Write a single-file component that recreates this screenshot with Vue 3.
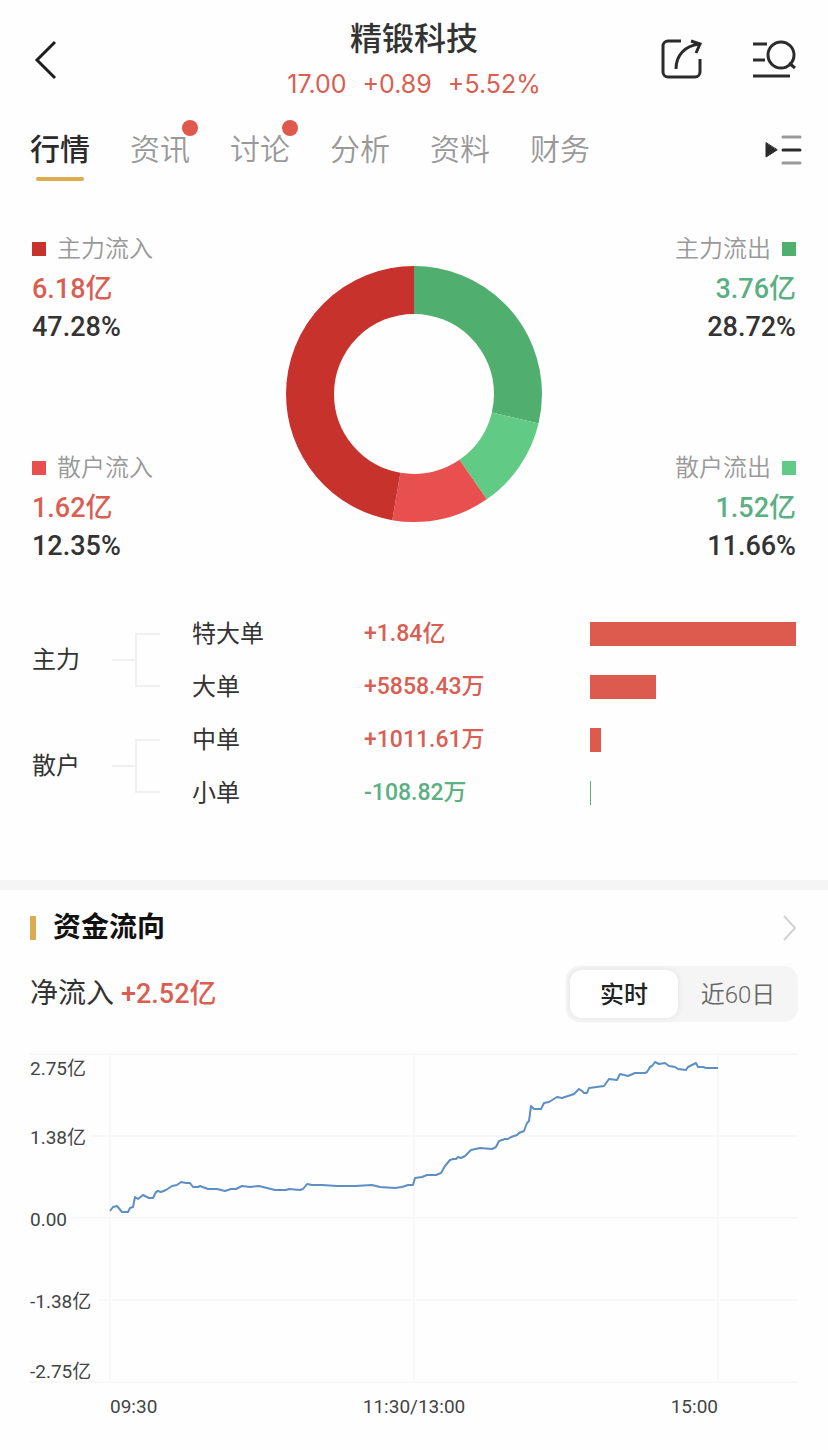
<script setup>
import { ref } from 'vue'

const tabs = [
  { name: '行情' },
  { name: '资讯', dot: true },
  { name: '讨论', dot: true },
  { name: '分析' },
  { name: '资料' },
  { name: '财务' }
]
const activeTab = ref('行情')

const inflows = [
  { label: '主力流入', value: '6.18亿', percent: '47.28%', tone: 'red-deep' },
  { label: '散户流入', value: '1.62亿', percent: '12.35%', tone: 'red-light' }
]
const outflows = [
  { label: '主力流出', value: '3.76亿', percent: '28.72%', tone: 'green-deep' },
  { label: '散户流出', value: '1.52亿', percent: '11.66%', tone: 'green-light' }
]

const slices = [
  { tone: 'green-deep', share: 28.72, start: 0 },
  { tone: 'green-light', share: 11.66, start: 28.72 },
  { tone: 'red-light', share: 12.34, start: 40.38 },
  { tone: 'red-deep', share: 47.28, start: 52.72 }
]

const orders = [
  { group: '主力', name: '特大单', amount: '+1.84亿', width: 100 },
  { name: '大单', amount: '+5858.43万', width: 32 },
  { group: '散户', name: '中单', amount: '+1011.61万', width: 5.4 },
  { name: '小单', amount: '-108.82万', width: 0.5, down: true }
]

const range = ref('实时')
const ranges = ['实时', '近60日']

const gridRows = [
  { text: '2.75亿', y: 10, textY: 31, from: 0 },
  { text: '1.38亿', y: 92, textY: 100, from: 60 },
  { text: '0.00', y: 174, textY: 182, from: 40 },
  { text: '-1.38亿', y: 256, textY: 264, from: 68 },
  { text: '-2.75亿', y: 338, textY: 334, from: 0 }
]
const gridColumns = [80, 384, 688]

const line = [
  '80,167 83,163 87,162 92,168 98,168 100,164 103,163 105,153 108,155 113,151 119,154 123,154',
  '126,148 128,147 131,148 136,146 142,142 147,141 151,138 156,139 160,139 163,143 168,143 170,142',
  '178,145 187,145 195,147 201,145 206,145 212,142 220,143 229,142 237,144 245,146 256,146 259,145',
  '270,146 273,145 277,140 282,141 292,141 307,142 316,142 325,142 342,141 350,143 365,144 372,143',
  '378,141 383,141 385,134 392,133 397,131 406,131 411,129 415,122 420,116 423,115 426,115 428,113',
  '431,114 435,112 441,106 450,104 462,105 466,103 469,97 475,95 478,95 481,93 487,91 489,89',
  '494,87 497,79 499,77 501,62 504,65 511,65 514,59 519,58 527,53 532,54 538,52 544,50 549,45',
  '552,47 554,49 557,49 559,44 574,42 579,35 587,36 590,30 598,32 605,29 615,29 617,28 620,23',
  '622,22 625,18 629,20 635,19 639,22 645,23 648,25 656,26 658,23 666,19 668,23 673,23 676,24 688,24'
].join(' ')
</script>

<template>
  <div class="page">
    <header class="top">
      <button class="icon-button" type="button" aria-label="返回">
        <svg width="28" height="44" viewBox="0 0 28 44" fill="none" stroke="#1e1e1e" stroke-width="3">
          <path d="M23 4 5 22l18 18" />
        </svg>
      </button>
      <div class="stock">
        <h1>精锻科技</h1>
        <p class="quote"><span>17.00</span><span>+0.89</span><span>+5.52%</span></p>
      </div>
      <div class="actions">
        <button class="icon-button" type="button" aria-label="分享">
          <svg width="44" height="44" viewBox="0 0 44 44" fill="none" stroke="#2b2b2b" stroke-width="3">
            <path d="M21 3H8a5 5 0 0 0-5 5v26a5 5 0 0 0 5 5h27a5 5 0 0 0 5-5V21" />
            <path d="M16 31C16 17 25 8 39 6M31 3l9 3-4 9" />
          </svg>
        </button>
        <button class="icon-button" type="button" aria-label="搜索">
          <svg width="44" height="44" viewBox="0 0 44 44" fill="none" stroke="#2b2b2b" stroke-width="3">
            <path d="M1 6h14M1 22h12M1 38h37M37 25l6 5" />
            <circle cx="29" cy="17" r="13" />
          </svg>
        </button>
      </div>
    </header>

    <nav class="tabs">
      <button
        v-for="tab in tabs"
        :key="tab.name"
        type="button"
        class="tab"
        :class="{ active: tab.name === activeTab }"
        @click="activeTab = tab.name"
      >
        {{ tab.name }}
        <i v-if="tab.dot" class="dot"></i>
      </button>
      <button class="icon-button more" type="button" aria-label="更多">
        <svg width="38" height="32" viewBox="0 0 38 32" fill="none" stroke-width="3" stroke-linecap="round">
          <path d="M2 9v14l11-7z" fill="#2b2b2b" stroke="#2b2b2b" stroke-width="1" stroke-linejoin="round" />
          <path d="M19 3h17M19 29h17" stroke="#999" />
          <path d="M19 16h17" stroke="#2b2b2b" />
        </svg>
      </button>
    </nav>

    <section class="summary">
      <div class="side">
        <div v-for="item in inflows" :key="item.label" class="stat">
          <div class="stat-label"><i class="swatch" :class="item.tone"></i>{{ item.label }}</div>
          <div class="stat-value up">{{ item.value }}</div>
          <div class="stat-percent">{{ item.percent }}</div>
        </div>
      </div>
      <svg class="donut" width="256" height="256" viewBox="0 0 256 256" fill="none" role="img" aria-label="资金分布">
        <circle
          v-for="slice in slices"
          :key="slice.tone"
          :class="slice.tone"
          cx="128"
          cy="128"
          r="104"
          stroke-width="48"
          pathLength="100"
          :stroke-dasharray="`${slice.share} ${100 - slice.share}`"
          :stroke-dashoffset="-slice.start"
          transform="rotate(-90 128 128)"
        />
      </svg>
      <div class="side right">
        <div v-for="item in outflows" :key="item.label" class="stat">
          <div class="stat-label">{{ item.label }}<i class="swatch" :class="item.tone"></i></div>
          <div class="stat-value down">{{ item.value }}</div>
          <div class="stat-percent">{{ item.percent }}</div>
        </div>
      </div>
    </section>

    <table class="orders">
      <colgroup>
        <col class="col-group" />
        <col class="col-name" />
        <col class="col-amount" />
        <col />
      </colgroup>
      <tbody>
        <tr v-for="order in orders" :key="order.name">
          <th v-if="order.group" rowspan="2" scope="rowgroup">
            <div class="group">
              {{ order.group }}
              <svg width="48" height="54" viewBox="0 0 48 54" fill="none" stroke="#f0f0f0" stroke-width="2">
                <path d="M0 27h24M48 1H24v52h24" />
              </svg>
            </div>
          </th>
          <td>{{ order.name }}</td>
          <td class="amount" :class="order.down ? 'down' : 'up'">{{ order.amount }}</td>
          <td>
            <div class="bar" :class="{ 'bar-down': order.down }" :style="{ width: order.width + '%' }"></div>
          </td>
        </tr>
      </tbody>
    </table>

    <section class="flow">
      <a class="flow-title" href="#">
        <h2>资金流向</h2>
        <svg width="16" height="28" viewBox="0 0 16 28" fill="none" stroke="#d2d2d2" stroke-width="2">
          <path d="m2 2 11 12L2 26" />
        </svg>
      </a>
      <div class="flow-head">
        <p class="net">净流入<strong class="up">+2.52亿</strong></p>
        <div class="switch">
          <button
            v-for="name in ranges"
            :key="name"
            type="button"
            :class="{ on: name === range }"
            @click="range = name"
          >{{ name }}</button>
        </div>
      </div>
      <svg class="chart" viewBox="0 0 768 376" role="img" aria-label="净流入走势">
        <g class="grid">
          <line v-for="row in gridRows" :key="row.y" :x1="row.from" x2="768" :y1="row.y" :y2="row.y" />
          <line v-for="x in gridColumns" :key="x" :x1="x" :x2="x" y1="10" y2="338" />
        </g>
        <polyline class="trend" :points="line" />
        <text v-for="row in gridRows" :key="row.text" x="0" :y="row.textY">{{ row.text }}</text>
        <text x="80" y="369">09:30</text>
        <text x="384" y="369" text-anchor="middle">11:30/13:00</text>
        <text x="688" y="369" text-anchor="end">15:00</text>
      </svg>
    </section>
  </div>
</template>

<style>
body {
  margin: 0;
  background: #fefefe;
}
</style>

<style scoped>
.page {
  color: #333;
  font-family: Roboto, "Noto Sans CJK SC", sans-serif;
  font-size: 24px;
}

h1,
h2,
p {
  margin: 0;
}

button {
  padding: 0;
  border: 0;
  background: none;
  color: inherit;
  font: inherit;
  cursor: pointer;
}

svg {
  display: block;
}

.up {
  color: #d95f52;
}

.down {
  color: #5bb083;
}

.top {
  display: grid;
  grid-template-columns: 1fr auto 1fr;
  align-items: center;
  padding: 17px 32px 0;
}

.icon-button {
  justify-self: start;
}

.stock {
  text-align: center;
}

h1 {
  margin-bottom: 5px;
  font-size: 32px;
  font-weight: 500;
  line-height: 44px;
}

.quote {
  display: flex;
  justify-content: center;
  gap: 16px;
  color: #d95f52;
  font-family: Inter, sans-serif;
  font-size: 25px;
  line-height: 36px;
}

.actions {
  display: flex;
  justify-content: flex-end;
  gap: 48px;
}

.tabs {
  display: flex;
  align-items: center;
  gap: 40px;
  padding: 25px 26px 0 30px;
}

.tab {
  position: relative;
  color: #999;
  font-size: 30px;
  font-weight: 350;
  line-height: 46px;
}

.tab.active {
  color: #2b2b2b;
  font-weight: 500;
}

.tab.active::after {
  position: absolute;
  bottom: -8px;
  left: 6px;
  right: 6px;
  height: 4px;
  border-radius: 2px;
  background: #deac50;
  content: "";
}

.dot {
  position: absolute;
  top: -7px;
  right: -8px;
  width: 16px;
  height: 16px;
  border-radius: 50%;
  background: #e0574d;
}

.more {
  margin-left: auto;
}

.summary {
  display: grid;
  grid-template-columns: 1fr auto 1fr;
  padding: 60px 32px 43px;
}

.side {
  display: flex;
  flex-direction: column;
  gap: 107px;
}

.right {
  text-align: right;
}

.stat-label {
  display: flex;
  align-items: center;
  gap: 11px;
  margin-bottom: 4px;
  color: #999;
  font-weight: 350;
  line-height: 32px;
}

.right .stat-label {
  justify-content: flex-end;
}

.swatch {
  width: 14px;
  height: 14px;
}

.swatch.red-deep {
  background: #c8322d;
}

.swatch.red-light {
  background: #e85050;
}

.swatch.green-deep {
  background: #50af6e;
}

.swatch.green-light {
  background: #61cb86;
}

.stat-value {
  font-size: 27px;
  font-weight: 500;
  line-height: 40px;
}

.stat-percent {
  font-size: 27px;
  font-weight: 500;
  line-height: 36px;
}

.donut {
  margin-top: 33px;
}

.donut .red-deep {
  stroke: #c8322d;
}

.donut .red-light {
  stroke: #e85050;
}

.donut .green-deep {
  stroke: #50af6e;
}

.donut .green-light {
  stroke: #61cb86;
}

.orders {
  width: calc(100% - 64px);
  margin: 0 32px 61px;
  border-collapse: collapse;
  table-layout: fixed;
}

.col-group {
  width: 160px;
}

.col-name {
  width: 172px;
}

.col-amount {
  width: 226px;
}

.orders th,
.orders td {
  height: 53px;
  padding: 0;
  font-weight: 400;
  line-height: 32px;
  text-align: left;
}

.orders .amount {
  font-size: 23px;
  font-weight: 500;
}

.group {
  display: flex;
  align-items: center;
  gap: 32px;
}

.bar {
  height: 24px;
  background: #dd5b4e;
}

.bar-down {
  background: #5bb083;
}

.flow {
  padding: 16px 30px 20px;
  border-top: 10px solid #f5f5f5;
}

.flow-title {
  display: flex;
  align-items: center;
  justify-content: space-between;
  color: #111;
  text-decoration: none;
}

h2 {
  display: flex;
  align-items: center;
  gap: 17px;
  font-size: 28px;
  font-weight: 700;
  line-height: 44px;
}

h2::before {
  width: 6px;
  height: 24px;
  background: #deac50;
  content: "";
}

.flow-head {
  display: flex;
  align-items: center;
  justify-content: space-between;
  margin: 16px 0 22px;
}

.net {
  display: flex;
  align-items: baseline;
  gap: 7px;
  font-size: 28px;
  line-height: 40px;
}

.net strong {
  font-size: 27px;
  font-weight: 500;
}

.switch {
  display: flex;
  gap: 4px;
  padding: 4px;
  border-radius: 14px;
  background: #f5f5f5;
}

.switch button {
  width: 112px;
  padding-top: 2px;
  border-radius: 12px;
  color: #666;
  font-weight: 350;
  line-height: 46px;
}

.switch .on {
  width: 108px;
  background: #fff;
  box-shadow: 0 0 6px #e2e2e2;
  color: #222;
  font-weight: 500;
}

.chart {
  width: 100%;
  fill: #444;
  font-size: 19px;
}

.grid line {
  stroke: #f8f8f8;
  stroke-width: 2;
}

.trend {
  fill: none;
  stroke: #5d8fc4;
  stroke-width: 2;
  stroke-linejoin: round;
}
</style>
